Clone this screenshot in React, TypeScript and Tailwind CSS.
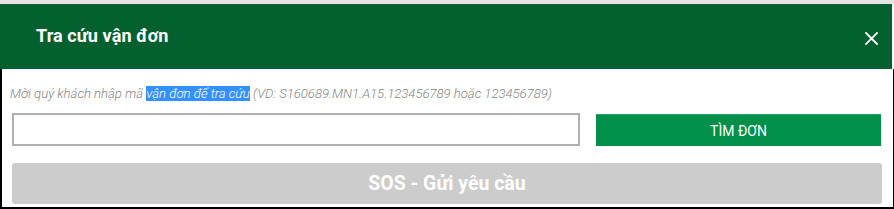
import React, { useState } from 'react';

const TrackingModal: React.FC = () => {
  const [code, setCode] = useState<string>('');

  return (
    <div className="w-[894px] h-[209px] bg-white overflow-hidden" style={{ fontFamily: 'Roboto, "Liberation Sans", sans-serif' }}>
      {/* top strip */}
      <div className="h-[4px] bg-[#e4e4e4]" />

      {/* header */}
      <div className="h-[65px] bg-[#04612f] flex items-center justify-between pl-[36px] pr-[14px] border-r-2 border-white">
        <h1 className="text-[18px] font-bold text-white leading-none tracking-[0.1px] mt-[-1px]">Tra cứu vận đơn</h1>
        <button className="w-[13px] h-[13px] mt-[4px] focus:outline-none" aria-label="close">
          <svg width="13" height="13" viewBox="0 0 13 13">
            <path d="M1 1 L12 12 M12 1 L1 12" stroke="#fff" strokeWidth="1.8" strokeLinecap="square" />
          </svg>
        </button>
      </div>

      {/* body */}
      <div className="h-[140px] border-l-2 border-r border-b-2 border-black pl-[10px] pr-[10px] pt-[17px]">
        <p className="text-[13.1px] leading-[16px] italic font-light text-[#858585] -ml-[2px]">
          Mời quý khách nhập mã <span className="bg-[#3390ff] text-white">vận đơn để tra cứu</span> (VD: S160689.MN1.A15.123456789 hoặc 123456789)
        </p>

        <div className="flex mt-[11px]">
          <input
            value={code}
            onChange={(e) => setCode(e.target.value)}
            className="w-[568px] h-[33px] border-2 border-[#b0b0b0] px-2 text-sm focus:outline-none"
          />
          <button className="ml-[16px] mt-[1px] w-[285px] h-[32px] bg-[#00904a] border-t border-[#2aa260] text-white text-[14px] leading-none focus:outline-none">
            TÌM ĐƠN
          </button>
        </div>

        <button className="mt-[17px] w-[870px] h-[41px] rounded-[3px] bg-[#cccccc] text-white text-[19.5px] font-bold focus:outline-none">
          SOS - Gửi yêu cầu
        </button>
      </div>
    </div>
  );
};

export default function App() {
  return <TrackingModal />;
}
